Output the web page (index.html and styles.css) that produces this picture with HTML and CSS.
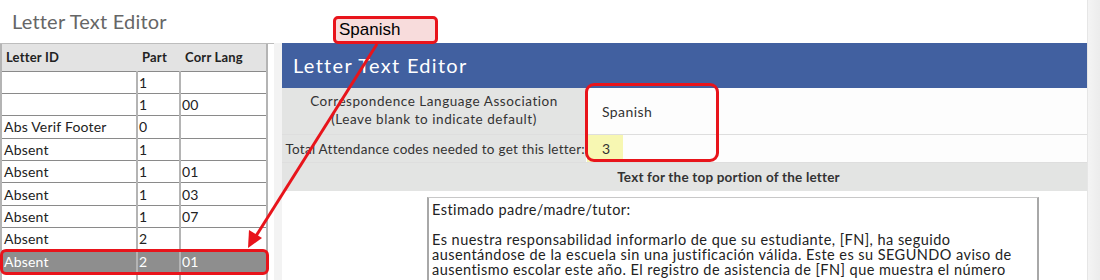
FILE: index.html
```html
<!DOCTYPE html>
<html lang="en">
<head>
    <meta charset="UTF-8">
    <title>Letter Text Editor</title>
    <link rel="stylesheet" href="styles.css">
</head>
<body>
    <div class="page">
        <div class="main">
            <h1 class="page-title">Letter Text Editor</h1>
            <div class="workspace">
                <div class="list-panel">
                    <table class="letters">
                        <thead>
                            <tr>
                                <th class="col-id">Letter ID</th>
                                <th class="col-part">Part</th>
                                <th class="col-lang">Corr Lang</th>
                            </tr>
                        </thead>
                        <tbody>
                            <tr><td></td><td>1</td><td></td></tr>
                            <tr><td></td><td>1</td><td>00</td></tr>
                            <tr><td>Abs Verif Footer</td><td>0</td><td></td></tr>
                            <tr><td>Absent</td><td>1</td><td></td></tr>
                            <tr><td>Absent</td><td>1</td><td>01</td></tr>
                            <tr><td>Absent</td><td>1</td><td>03</td></tr>
                            <tr><td>Absent</td><td>1</td><td>07</td></tr>
                            <tr><td>Absent</td><td>2</td><td></td></tr>
                            <tr class="selected"><td>Absent</td><td>2</td><td>01</td></tr>
                            <tr><td></td><td></td><td></td></tr>
                        </tbody>
                    </table>
                    <div class="mark mark-row"></div>
                </div>
                <div class="gutter"></div>
                <div class="editor">
                    <div class="editor-head">Letter Text Editor</div>
                    <div class="field">
                        <div class="field-label centered">Correspondence Language Association<br>(Leave blank to indicate default)</div>
                        <div class="field-value">Spanish</div>
                    </div>
                    <div class="field short">
                        <div class="field-label">Total Attendance codes needed to get this letter:</div>
                        <div class="field-value"><span class="count">3</span></div>
                    </div>
                    <div class="mark mark-fields"></div>
                    <div class="section-head">Text for the top portion of the letter</div>
                    <div class="letter-row">
                        <div class="letter-text">Estimado padre/madre/tutor:

Es nuestra responsabilidad informarlo de que su estudiante, [FN], ha seguido
ausentándose de la escuela sin una justificación válida. Este es su SEGUNDO aviso de
ausentismo escolar este año. El registro de asistencia de [FN] que muestra el número</div>
                    </div>
                </div>
            </div>
        </div>
        <div class="scrollbar"></div>
    </div>

    <!-- annotation: callout and arrow -->
    <div class="callout">Spanish</div>
    <svg class="arrow" width="1100" height="280" viewBox="0 0 1100 280">
        <line x1="377" y1="44" x2="256" y2="236" stroke="#e8141b" stroke-width="3"/>
        <polygon points="248,248 249,230 262,238" fill="#e8141b"/>
    </svg>
</body>
</html>
```

FILE: styles.css
```css
* {
    margin: 0;
    padding: 0;
    box-sizing: border-box;
}

body {
    width: 1100px;
    height: 280px;
    overflow: hidden;
    background: #fff;
    font-family: 'Lato', 'Noto Sans', sans-serif;
    color: #333;
    position: relative;
}

.page {
    display: flex;
    height: 280px;
}

.main {
    width: 1088px;
    border-right: 1px solid #e6e6e6;
}

.scrollbar {
    flex: 1;
    background: linear-gradient(90deg, #f4f4f4, #ececec);
}

.page-title {
    height: 43px;
    padding: 9px 0 0 12px;
    font-size: 20px;
    letter-spacing: 0.2px;
    font-weight: normal;
    color: #666;
}

.workspace {
    display: flex;
    height: 237px;
}

/* left list */
.list-panel {
    width: 274px;
    border-top: 1px solid #bdbdbd;
    position: relative;
}

.letters {
    width: 268px;
    border-collapse: collapse;
    font-size: 14px;
    letter-spacing: 0.2px;
    color: #222;
    border-left: 2px solid #b4b4b4;
    border-right: 2px solid #b4b4b4;
}

.letters th {
    height: 27px;
    background: #e3e3e3;
    font-size: 13px;
    font-weight: bold;
    text-align: left;
    padding: 0 0 0 4px;
    border-bottom: 1px solid #8a8a8a;
}

.letters th.col-part,
.letters th.col-lang {
    padding-left: 5px;
}

.col-id { width: 136px; }
.col-part { width: 43px; }

.letters td {
    height: 22.4px;
    padding: 0 0 0 2px;
    border-bottom: 1px solid #8a8a8a;
    white-space: nowrap;
}

.letters td + td {
    border-left: 2px solid #b4b4b4;
    padding-left: 1px;
}

.letters tbody tr:first-child td { border-top: 1px solid #8a8a8a; }

.letters tr.selected td {
    background: #8e8e8e;
    color: #fff;
}

.gutter {
    width: 8px;
    background: #f3f3f3;
}

/* right editor */
.editor {
    flex: 1;
    position: relative;
    font-size: 13.5px;
    letter-spacing: 0.4px;
}

.editor-head {
    height: 45px;
    background: #4160a0;
    color: #fff;
    font-size: 20px;
    letter-spacing: 1.3px;
    padding: 10px 0 0 11px;
}

.field {
    display: flex;
    height: 47px;
    border-bottom: 1px solid #dedede;
}

.field.short {
    height: 28px;
}

.field-label {
    width: 304px;
    background: #e3e4e3;
    display: flex;
    align-items: center;
    justify-content: flex-end;
    padding-right: 1px;
    white-space: nowrap;
    letter-spacing: 0.25px;
}

.field-label.centered {
    justify-content: center;
    text-align: center;
    line-height: 18px;
    padding: 0 0 2px;
    letter-spacing: 0.55px;
}

.field-value {
    flex: 1;
    background: #fdfdfd;
    display: flex;
    align-items: center;
    padding-left: 16px;
    font-size: 14px;
}

.field.short .field-value {
    padding-left: 1px;
    align-items: stretch;
}

.count {
    width: 36px;
    background: #f7f7b2;
    display: flex;
    align-items: center;
    padding-left: 15px;
}

.section-head {
    height: 28px;
    background: #e3e4e3;
    display: flex;
    align-items: center;
    justify-content: center;
    padding-left: 88px;
    font-weight: bold;
    letter-spacing: 0.2px;
    color: #333;
}

.letter-row {
    padding: 6px 0 0 145px;
}

.letter-text {
    width: 612px;
    height: 120px;
    border: 1px solid #c8c8c8;
    border-left: 2px solid #a8a8a8;
    border-right: 2px solid #a8a8a8;
    padding: 4px 0 0 3px;
    white-space: pre;
    font-size: 14.5px;
    letter-spacing: 0.45px;
    line-height: 15px;
    color: #222;
}

/* red annotation marks */
.mark {
    position: absolute;
    border: 3px solid #e8141b;
    border-radius: 6px;
}

.mark-row {
    left: 0;
    top: 205px;
    width: 269px;
    height: 26px;
}

.mark-fields {
    left: 303px;
    top: 40px;
    width: 134px;
    height: 79px;
    border-radius: 9px;
}

.callout {
    position: absolute;
    left: 333px;
    top: 16px;
    width: 105px;
    height: 28px;
    background: #f8dcdc;
    border: 3px solid #e8141b;
    border-radius: 5px;
    font-family: 'Liberation Sans', Arial, sans-serif;
    font-size: 17px;
    color: #000;
    padding: 1px 0 0 3px;
}

.arrow {
    position: absolute;
    left: 0;
    top: 0;
}
```
